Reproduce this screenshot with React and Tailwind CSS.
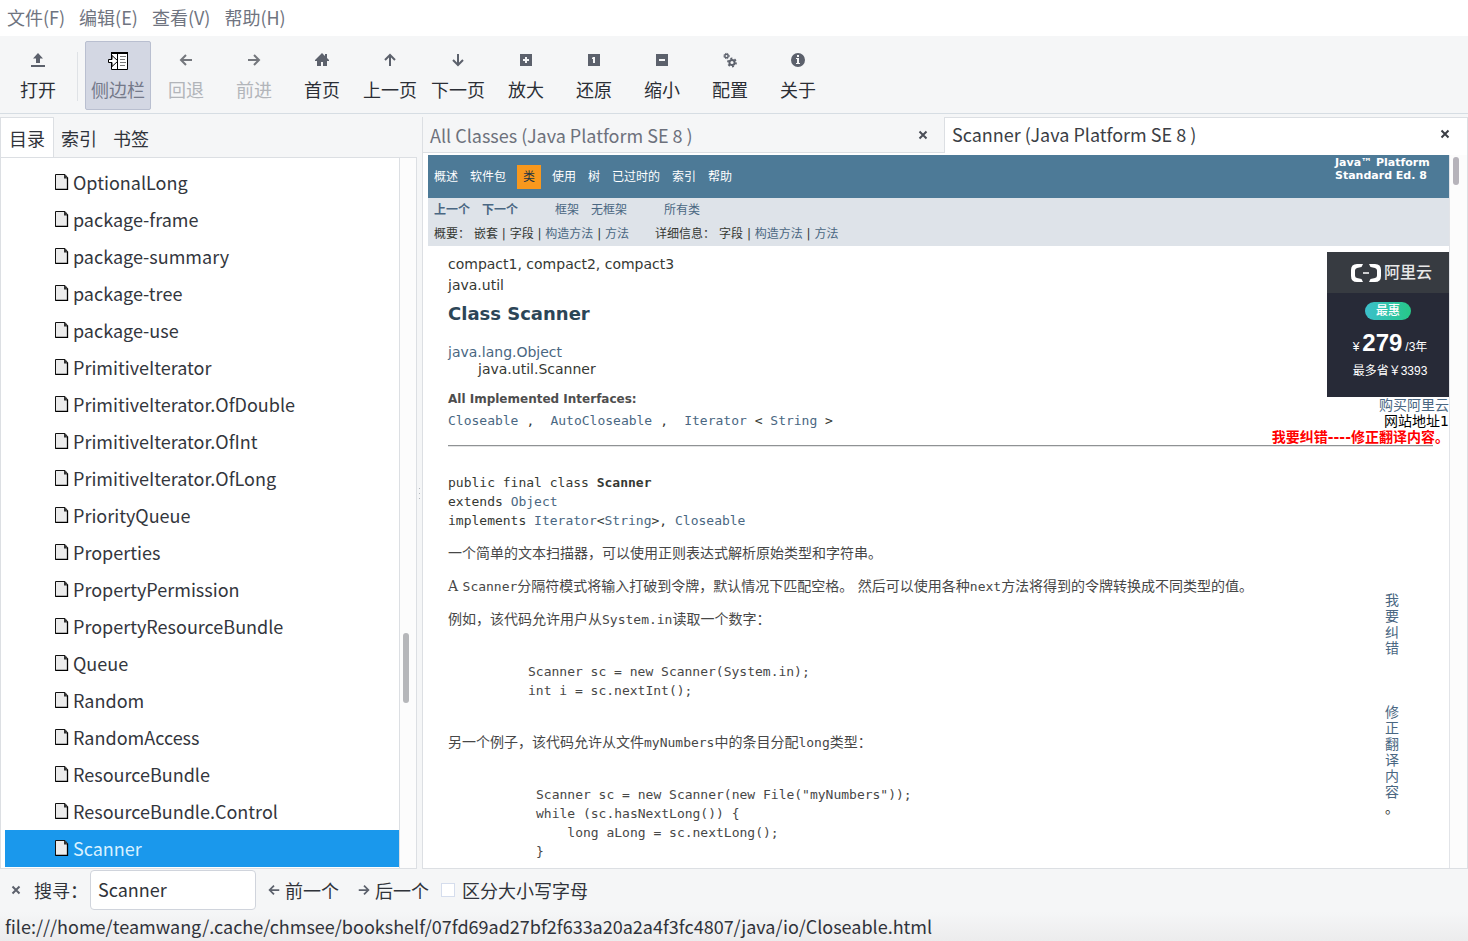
import React, { useState } from 'react';

const UI = 'font-["Noto_Sans_CJK_SC","Noto_Sans",sans-serif]';
const DOC = 'font-["DejaVu_Sans","Noto_Sans_CJK_SC",sans-serif]';
const MONO = 'text-[13px] font-["DejaVu_Sans_Mono","Noto_Sans_CJK_SC",monospace]';
const SERIF = 'font-["DejaVu_Serif","Noto_Sans_CJK_SC",serif]';

const stroke = { fill: 'none', stroke: 'currentColor', strokeWidth: 2 };

const icons = {
  open: <path fill="currentColor" d="M8 1 13 6.500H10V11H6V6.500H3ZM1 13H15V15H1Z" />,
  left: <path {...stroke} d="M14 8H3M8 3 3 8l5 5" />,
  right: <path {...stroke} d="M2 8h11M8 3l5 5-5 5" />,
  up: <path {...stroke} d="M8 14V3M3 8l5-5 5 5" />,
  down: <path {...stroke} d="M8 2v11M3 8l5 5 5-5" />,
  home: <path fill="currentColor" d="M8 1 1 8v1h2v5h4v-4h2v4h4V9h2V8l-2-2V2h-2v2Z" />,
  plus: <path fill="currentColor" fillRule="evenodd" d="M2 2h12v12H2ZM7 5v2H5v2h2v2h2V9h2V7H9V5Z" />,
  one: <path fill="currentColor" fillRule="evenodd" d="M2 2h12v12H2ZM7 5 6 6v1h1v4h2V5Z" />,
  minus: <path fill="currentColor" fillRule="evenodd" d="M2 2h12v12H2ZM5 7v2h6V7Z" />,
  gears: (
    <g fill="none" stroke="currentColor">
      <circle cx="4.500" cy="4" r="1.700" strokeWidth="1.500" />
      <circle cx="4.500" cy="4" r="2.700" strokeWidth="1" strokeDasharray="1.200 1" />
      <circle cx="10" cy="10.500" r="2.600" strokeWidth="2" />
      <circle cx="10" cy="10.500" r="4.100" strokeWidth="1.600" strokeDasharray="2 2.290" />
    </g>
  ),
  info: (
    <path
      fill="currentColor"
      fillRule="evenodd"
      d="M8 1a7 7 0 1 0 0 14A7 7 0 1 0 8 1ZM7 3h2v2H7ZM6 6h3v5h1v1H6v-1h1V7H6Z"
    />
  ),
  close: <path {...stroke} d="M4.500 4.500l7 7M11.500 4.500l-7 7" />,
};

function Icon({ name, className = 'size-4' }) {
  return (
    <svg viewBox="0 0 16 16" className={className} aria-hidden="true">
      {icons[name]}
    </svg>
  );
}

function SidebarIcon() {
  return (
    <svg viewBox="0 0 20 20" className="size-5" aria-hidden="true">
      <path d="M3.500 1.500h16v17h-16z" fill="#fff" stroke="#000" />
      <path d="M3 1h17v2H3z" fill="#000" />
      <path d="M9.500 2v16" stroke="#000" />
      <path d="M12 5.500h6M12 8.500h5M12 11.500h6M12 14.500h5" stroke="#777" />
      <path d="M.5 8.500H4v-4l6 5.500-6 5.500v-4H.5z" fill="#fff" stroke="#000" />
    </svg>
  );
}

function PageIcon() {
  return (
    <svg viewBox="0 0 14 16" className="h-4 w-3.5" aria-hidden="true">
      <path d="M.5.5H10L12.500 3.500V15.500H.5z" fill="#ececec" stroke="#111" />
      <path d="M9 1v3.500h3.500L10 .5Z" fill="#333" />
      <path d="M12.500 3.500v12H.5" fill="none" stroke="#000" strokeWidth="1.300" />
    </svg>
  );
}

const menus = ['文件(F)', '编辑(E)', '查看(V)', '帮助(H)'];

const tools = [
  ['left', '回退', true],
  ['right', '前进', true],
  ['home', '首页'],
  ['up', '上一页'],
  ['down', '下一页'],
  ['plus', '放大'],
  ['one', '还原'],
  ['minus', '缩小'],
  ['gears', '配置'],
  ['info', '关于'],
];

const tree = [
  'OptionalLong', 'package-frame', 'package-summary', 'package-tree', 'package-use',
  'PrimitiveIterator', 'PrimitiveIterator.OfDouble', 'PrimitiveIterator.OfInt',
  'PrimitiveIterator.OfLong', 'PriorityQueue', 'Properties', 'PropertyPermission',
  'PropertyResourceBundle', 'Queue', 'Random', 'RandomAccess', 'ResourceBundle',
  'ResourceBundle.Control', 'Scanner',
];

function ToolButton({ icon, label, disabled }) {
  return (
    <button
      type="button"
      disabled={disabled}
      className="flex w-[68px] flex-col items-center gap-[7px] pt-3 text-[#5c616c] disabled:text-[#74777d]"
    >
      <Icon name={icon} />
      <span className={disabled ? 'leading-7 text-[#b2b5ba]' : 'leading-7 text-[#2b2e35]'}>{label}</span>
    </button>
  );
}

function A({ children, className = '' }) {
  return <a href="#" className={`text-[#4a6782] ${className}`}>{children}</a>;
}

function Sidebar() {
  const [selected, setSelected] = useState('Scanner');
  return (
    <aside className="flex w-[417px] shrink-0 flex-col">
      <div role="tablist" className="flex h-10 text-[#30333a]">
        <button role="tab" aria-selected="true" className="-mb-px w-[54px] border-x border-t border-[#dcdfe3] bg-white">目录</button>
        <button role="tab" aria-selected="false" className="w-[50px] pt-0.5">索引</button>
        <button role="tab" aria-selected="false" className="w-[54px] pt-0.5">书签</button>
      </div>
      <div className="flex min-h-0 flex-1 border border-[#dcdfe3] bg-white">
        <ul className="min-w-0 flex-1 overflow-hidden pl-1 pt-1.5">
          {tree.map((name) => (
            <li key={name}>
              <button
                type="button"
                onClick={() => setSelected(name)}
                className={
                  name === selected
                    ? 'flex h-[37px] w-full items-center gap-1 bg-[#1a98ec] pb-0.5 pl-[50px] text-[#d9f1ff]'
                    : 'flex h-[37px] w-full items-center gap-1 pb-0.5 pl-[50px] text-[#33363d]'
                }
              >
                <PageIcon />
                <span>{name}</span>
              </button>
            </li>
          ))}
        </ul>
        <div className="flex w-[17px] flex-col border-l border-[#dcdfe3] bg-[#fcfcfc] pl-[3px]">
          <div className="grow-[474]" />
          <div className="h-[70px] w-1.5 rounded-full bg-[#b6b7ba]" />
          <div className="grow-[165]" />
        </div>
      </div>
    </aside>
  );
}

function Advert() {
  return (
    <div className="absolute right-0 top-[97px] flex flex-col items-end text-[14px] leading-4">
      <a href="#" className="flex h-[145px] w-[122px] flex-col items-center bg-[#272a37] text-xs text-white">
        <span className="flex h-[41px] w-full items-center justify-end gap-[3px] bg-[#373b41] pr-[17px] text-[#e8e8e8]">
          <svg viewBox="0 0 30 20" className="h-5 w-[30px]" aria-hidden="true">
            <path
              d="M12 1H6Q0 1 0 7v6q0 6 6 6h6l-1.500-3-4.500-1q-2-.5-2-2.500v-5q0-2 2-2.500l4.500-1ZM18 1h6q6 0 6 6v6q0 6-6 6h-6l1.500-3 4.500-1q2-.5 2-2.500v-5q0-2-2-2.500l-4.500-1ZM12 9.300h6v1.400h-6z"
              fill="#fff"
            />
          </svg>
          <span className="text-base font-medium leading-5">阿里云</span>
        </span>
        <span className="mt-[9px] h-[18px] w-[46px] rounded-full bg-linear-to-r from-[#3cbfcb] to-[#27c887] text-center font-medium leading-[18px]">最惠</span>
        <span className='mt-[11px] flex items-baseline gap-[3px] pl-1 font-["Liberation_Sans","Noto_Sans_CJK_SC",sans-serif] leading-6'>
          <span>¥</span>
          <b className="text-2xl leading-6">279</b>
          <span>/3年</span>
        </span>
        <span className='mt-1 pl-1 font-["Liberation_Sans","Noto_Sans_CJK_SC",sans-serif]'>最多省￥3393</span>
      </a>
      <A>购买阿里云</A>
      <span className="text-black">网站地址1</span>
      <a href="#" className="font-bold text-[#ff0000]">我要纠错----修正翻译内容。</a>
    </div>
  );
}

function JavaDoc() {
  return (
    <article className={`relative min-w-0 flex-1 overflow-hidden bg-white text-sm text-[#353833] ${DOC}`}>
      <header>
        <nav className="flex h-[43px] justify-between bg-[#4d7a97] text-xs text-white">
          <div className="flex items-center gap-3 pl-1.5">
            <a href="#">概述</a>
            <a href="#">软件包</a>
            <span className="-mx-px bg-[#f8981d] px-1.5 leading-6 text-[#253441]">类</span>
            <a href="#">使用</a>
            <a href="#">树</a>
            <a href="#">已过时的</a>
            <a href="#">索引</a>
            <a href="#">帮助</a>
          </div>
          <strong className="w-[114px] pt-px text-[11px] leading-[13px]">Java™ Platform<br />Standard Ed. 8</strong>
        </nav>
        <div className="h-12 bg-[#dee3e9] pl-1.5 text-xs leading-6">
          <div className="flex">
            <A className="mr-3 font-bold">上一个</A>
            <A className="mr-[37px] font-bold">下一个</A>
            <A className="mr-3">框架</A>
            <A className="mr-[37px]">无框架</A>
            <A>所有类</A>
          </div>
          <div className="flex">
            <span className="w-10">概要：</span>
            <span className="mr-[26px]">嵌套 | 字段 | <A>构造方法</A> | <A>方法</A></span>
            <span className="w-16">详细信息：</span>
            <span>字段 | <A>构造方法</A> | <A>方法</A></span>
          </div>
        </div>
      </header>

      <div className="pl-5 pr-4 pt-2">
        <p className="leading-[21px]">compact1, compact2, compact3</p>
        <p className="leading-[21px]">java.util</p>
        <h1 className="mt-1.5 text-lg font-bold leading-6 text-[#2c4557]">Class Scanner</h1>
        <div className="mt-[18px] leading-[17px]">
          <p><A>java.lang.Object</A></p>
          <p className="pl-[30px]">java.util.Scanner</p>
        </div>
        <h2 className="mt-[11px] text-xs font-bold leading-5 text-[#4e4e4e]">All Implemented Interfaces:</h2>
        <p className={`flex whitespace-pre leading-6 ${MONO}`}>
          <A>Closeable</A><span className="w-8 pl-2">,</span>
          <A>AutoCloseable</A><span className="w-8 pl-2">,</span>
          <A>Iterator</A><span>{' < '}</span><A>String</A><span>{' >'}</span>
        </p>
        <hr className="mt-3 border-b border-t border-b-[#e3e4e5] border-t-[#8f9294]" />
        <pre className={`mt-[26px] leading-[19px] ${MONO}`}>
          {'public final class '}<b>Scanner</b>{'\nextends '}<A>Object</A>{'\nimplements '}
          <A>Iterator</A>{'<'}<A>String</A>{'>, '}<A>Closeable</A>
        </pre>
        <div className={`mt-[13px] flex flex-col gap-3 leading-[21px] text-[#474747] ${SERIF}`}>
          <p>一个简单的文本扫描器，可以使用正则表达式解析原始类型和字符串。</p>
          <p>A <code className={MONO}>Scanner</code>分隔符模式将输入打破到令牌，默认情况下匹配空格。 然后可以使用各种<code className={MONO}>next</code>方法将得到的令牌转换成不同类型的值。</p>
          <p>例如，该代码允许用户从<code className={MONO}>System.in</code>读取一个数字：</p>
        </div>
        <pre className={`mt-8 pl-20 leading-[19px] text-[#474747] ${MONO}`}>{'Scanner sc = new Scanner(System.in);\nint i = sc.nextInt();'}</pre>
        <p className={`mt-8 leading-[21px] text-[#474747] ${SERIF}`}>另一个例子，该代码允许从文件<code className={MONO}>myNumbers</code>中的条目分配<code className={MONO}>long</code>类型：</p>
        <pre className={`mt-8 pl-[88px] leading-[19px] text-[#474747] ${MONO}`}>{'Scanner sc = new Scanner(new File("myNumbers"));\nwhile (sc.hasNextLong()) {\n    long aLong = sc.nextLong();\n}'}</pre>
      </div>

      <Advert />
      <a href="#" className="absolute right-[50px] top-[437px] flex w-3.5 flex-col gap-12 leading-4 text-[#4a6782]">
        <span>我要纠错</span>
        <span className="break-all">修正翻译内容<span className="block text-[#353833]">。</span></span>
      </a>
    </article>
  );
}

function Viewer() {
  return (
    <main className="flex min-w-0 flex-1 flex-col border-b border-l border-[#dcdfe3]">
      <div role="tablist" className="flex h-9">
        <div className="flex flex-1 items-center justify-between border-b border-[#dcdfe3] pl-[7px] pr-[13px] text-[#6d717c]">
          <button role="tab" aria-selected="false">All Classes (Java Platform SE 8 )</button>
          <button aria-label="关闭标签页" className="text-[#4a4e57]"><Icon name="close" /></button>
        </div>
        <div className="flex flex-1 items-center justify-between border-x border-t border-[#dcdfe3] bg-white pb-1 pl-[7px] pr-3.5 text-[#3b3e45]">
          <button role="tab" aria-selected="true">Scanner (Java Platform SE 8 )</button>
          <button aria-label="关闭标签页"><Icon name="close" /></button>
        </div>
      </div>
      <div className="flex min-h-0 flex-1 border-r border-[#dcdfe3] bg-white pl-[5px] pt-0.5">
        <JavaDoc />
        <div className="w-[18px] border-l border-[#e2e4e8] bg-[#fcfcfc] pl-[3px] pt-0.5">
          <div className="h-7 w-1.5 rounded-full bg-[#b6b3ba]" />
        </div>
      </div>
    </main>
  );
}

export default function App() {
  const [query, setQuery] = useState('Scanner');
  return (
    <div className={`flex h-screen flex-col overflow-hidden bg-[#f5f6f7] text-lg text-[#30333a] ${UI}`}>
      <nav className="flex h-9 shrink-0 items-center gap-3.5 bg-white pb-0.5 pl-[7px] text-[#6f7480]">
        {menus.map((m) => <button key={m} type="button">{m}</button>)}
      </nav>

      <div role="toolbar" className="flex h-[78px] shrink-0 border-b border-[#d6dde3] pl-1 pt-1">
        <ToolButton icon="open" label="打开" />
        <div className="mx-[5px] my-3 w-px bg-[#dfe2e6]" />
        <button type="button" aria-pressed="true" className="ml-0.5 mr-px mt-px flex h-[69px] w-[66px] flex-col items-center gap-1 rounded-xs border border-[#b9bfd0] bg-[#d3d7e3] pt-[9px] text-[#74798a]">
          <SidebarIcon />
          <span className="leading-7">侧边栏</span>
        </button>
        {tools.map(([icon, label, disabled]) => (
          <ToolButton key={label} icon={icon} label={label} disabled={disabled} />
        ))}
      </div>

      <div className="flex min-h-0 flex-1 pt-[3px]">
        <Sidebar />
        <div className="flex w-[5px] shrink-0 flex-col items-center justify-center gap-1">
          <i className="size-px bg-[#b4b8be]" />
          <i className="size-px bg-[#b4b8be]" />
          <i className="size-px bg-[#b4b8be]" />
        </div>
        <Viewer />
      </div>

      <form className="flex h-[43px] shrink-0 items-center pb-0.5 pl-2" onSubmit={(e) => e.preventDefault()}>
        <button type="button" aria-label="关闭搜索" className="mr-2.5 text-[#5c616c]"><Icon name="close" /></button>
        <label htmlFor="find" className="w-14">搜寻：</label>
        <input
          id="find"
          value={query}
          onChange={(e) => setQuery(e.target.value)}
          className="mr-[11px] h-10 w-[166px] rounded-sm border border-[#d0d4dc] bg-white px-[7px] pb-0.5 outline-none"
        />
        <button type="button" className="mr-[18px] flex items-center gap-1"><Icon name="left" className="size-3.5 text-[#5c616c]" />前一个</button>
        <button type="button" className="mr-3 flex items-center gap-1"><Icon name="right" className="size-3.5 text-[#5c616c]" />后一个</button>
        <label className="flex items-center gap-[7px]">
          <input type="checkbox" className="size-3.5 appearance-none border border-[#d5dded] bg-white" />
          区分大小写字母
        </label>
      </form>
      <footer className="h-[29px] shrink-0 bg-linear-to-b from-[#f5f6f7] to-[#ececed] pl-[5px] leading-7">
        file:///home/teamwang/.cache/chmsee/bookshelf/07fd69ad27bf2f633a20a2a4f3fc4807/java/io/Closeable.html
      </footer>
    </div>
  );
}
